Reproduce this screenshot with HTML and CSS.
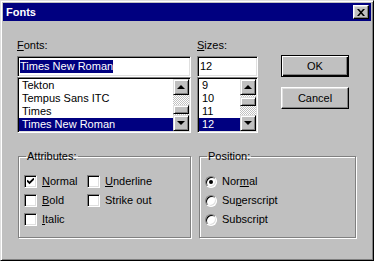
FILE: index.html
```html
<!DOCTYPE html>
<html lang="en">
<head>
  <meta charset="UTF-8" />
  <title>Fonts</title>
  <link rel="stylesheet" href="styles.css">
</head>
<body>
  <div class="window">
    <!-- Title bar -->
    <div class="titlebar">
      <span class="title">Fonts</span>
      <button class="close" aria-label="Close">
        <svg width="8" height="7" viewBox="0 0 8 7"><path d="M0 0h2l2 2.3L6 0h2L5 3.5 8 7H6L4 4.7 2 7H0l3-3.5z" fill="#000"/></svg>
      </button>
    </div>

    <div class="content">
      <!-- Font / size pickers and buttons -->
      <div class="top">
        <div class="field fonts">
          <label><u>F</u>onts:</label>
          <div class="textbox"><span class="sel">Times New Roman</span></div>
          <div class="listbox">
            <ul class="items">
              <li>Tekton</li>
              <li>Tempus Sans ITC</li>
              <li>Times</li>
              <li class="selected">Times New Roman</li>
            </ul>
            <div class="scrollbar">
              <div class="sb-btn"><span class="arrow up"></span></div>
              <div class="track" style="flex: 10"></div>
              <div class="thumb"></div>
              <div class="track" style="flex: 1"></div>
              <div class="sb-btn"><span class="arrow down"></span></div>
            </div>
          </div>
        </div>

        <div class="field sizes">
          <label><u>S</u>izes:</label>
          <div class="textbox"><span>12</span></div>
          <div class="listbox">
            <ul class="items">
              <li>9</li>
              <li>10</li>
              <li>11</li>
              <li class="selected">12</li>
            </ul>
            <div class="scrollbar">
              <div class="sb-btn"><span class="arrow up"></span></div>
              <div class="track" style="flex: 2"></div>
              <div class="thumb"></div>
              <div class="track" style="flex: 9"></div>
              <div class="sb-btn"><span class="arrow down"></span></div>
            </div>
          </div>
        </div>

        <div class="buttons">
          <button class="btn default">OK</button>
          <button class="btn">Cancel</button>
        </div>
      </div>

      <!-- Group boxes -->
      <div class="bottom">
        <fieldset class="group attributes">
          <legend>Attributes:</legend>
          <div class="checks">
            <div class="option"><span class="checkbox checked"><svg width="7" height="7" viewBox="0 0 7 7"><path d="M0 2.5l2.5 2.5L7 0.5" fill="none" stroke="#000" stroke-width="1.8"/></svg></span><span><u>N</u>ormal</span></div>
            <div class="option"><span class="checkbox"></span><span><u>U</u>nderline</span></div>
            <div class="option"><span class="checkbox"></span><span><u>B</u>old</span></div>
            <div class="option"><span class="checkbox"></span><span>Strike out</span></div>
            <div class="option"><span class="checkbox"></span><span><u>I</u>talic</span></div>
          </div>
        </fieldset>

        <fieldset class="group position">
          <legend>Position:</legend>
          <div class="radios">
            <div class="option"><span class="radio on"></span><span>Nor<u>m</u>al</span></div>
            <div class="option"><span class="radio"></span><span>Su<u>p</u>erscript</span></div>
            <div class="option"><span class="radio"></span><span>Subscript</span></div>
          </div>
        </fieldset>
      </div>
    </div>
  </div>
</body>
</html>
```

FILE: styles.css
```css
/* Basic Reset */
* {
  margin: 0;
  padding: 0;
  box-sizing: border-box;
}

body {
  background-color: #c0c0c0;
  font-family: "Liberation Sans", Arial, sans-serif;
  font-size: 11px;
  line-height: 13px;
  color: #000;
}

u {
  text-decoration: underline;
  text-underline-offset: 1px;
}

/* WINDOW FRAME */
.window {
  width: 374px;
  height: 261px;
  background-color: #c0c0c0;
  border: 1px solid;
  border-color: #dfdfdf #000 #000 #dfdfdf;
  box-shadow: inset 1px 1px #fff, inset -1px -1px #808080;
  padding: 2px;
}

/* TITLE BAR */
.titlebar {
  height: 18px;
  background-color: #000080;
  display: flex;
  align-items: center;
  justify-content: space-between;
  padding: 0 2px 0 3px;
}
.title {
  color: #fff;
  font-weight: bold;
}
.close {
  width: 16px;
  height: 14px;
  display: flex;
  align-items: center;
  justify-content: center;
  background-color: #c0c0c0;
  border: 1px solid;
  border-color: #fff #000 #000 #fff;
  box-shadow: inset -1px -1px #808080, inset 1px 1px #dfdfdf;
}

/* DIALOG CONTENT */
.content {
  padding: 18px 0 0 14px;
}

.top {
  display: flex;
}

.field label {
  display: block;
  height: 13px;
  margin-bottom: 4px;
}
.fonts { width: 174px; margin-right: 6px; }
.sizes { width: 61px; }

/* sunken 3D edge */
.textbox,
.listbox,
.checkbox {
  background-color: #fff;
  border: 1px solid;
  border-color: #808080 #fff #fff #808080;
  box-shadow: inset 1px 1px #000, inset -1px -1px #dfdfdf;
}

.textbox {
  height: 21px;
  padding: 3px 2px;
}
.textbox .sel {
  background-color: #000080;
  color: #fff;
  display: inline-block;
}

.listbox {
  height: 56px;
  padding: 1px;
  display: flex;
}
.items {
  list-style: none;
  flex: 1;
}
.items li {
  height: 13px;
  padding-left: 3px;
  white-space: nowrap;
}
.items li.selected {
  background-color: #000080;
  color: #fff;
}

/* SCROLLBAR */
.scrollbar {
  width: 16px;
  display: flex;
  flex-direction: column;
}
.sb-btn,
.thumb {
  background-color: #c0c0c0;
  border: 1px solid;
  border-color: #dfdfdf #000 #000 #dfdfdf;
  box-shadow: inset 1px 1px #fff, inset -1px -1px #808080;
}
.sb-btn {
  height: 16px;
  display: flex;
  align-items: center;
  justify-content: center;
}
.thumb { height: 9px; }
.track {
  background: repeating-conic-gradient(#fff 0 25%, #c0c0c0 0 50%) 0 0 / 2px 2px;
}
.arrow {
  width: 0;
  height: 0;
  border-left: 4px solid transparent;
  border-right: 4px solid transparent;
}
.arrow.up { border-bottom: 4px solid #000; }
.arrow.down { border-top: 4px solid #000; }

/* BUTTONS */
.buttons {
  margin-left: 23px;
  width: 68px;
  padding-top: 16px;
  display: flex;
  flex-direction: column;
  gap: 10px;
}
.btn {
  height: 22px;
  font: inherit;
  background-color: #c0c0c0;
  border: 1px solid;
  border-color: #fff #000 #000 #fff;
  box-shadow: inset -1px -1px #808080, inset 1px 1px #dfdfdf;
}
.btn.default {
  border: 1px solid #000;
  box-shadow: inset 1px 1px #fff, inset -1px -1px #000, inset -2px -2px #808080;
}

/* GROUP BOXES */
.bottom {
  display: flex;
  margin-top: 17px;
  margin-left: 1px;
  gap: 8px;
}
.group {
  height: 88px;
  border: 1px solid #808080;
  box-shadow: 1px 1px #fff, inset 1px 1px #fff;
  padding: 12px 5px 0 5px;
  min-width: 0;
}
.group legend {
  padding: 0 1px;
  margin-left: 2px;
  line-height: 13px;
}
.attributes { width: 173px; }
.position { width: 157px; }

.checks {
  display: grid;
  grid-template-columns: 63px auto;
  row-gap: 6px;
}
.radios {
  display: flex;
  flex-direction: column;
  gap: 6px;
}
.option {
  display: flex;
  align-items: center;
  gap: 5px;
  height: 13px;
  white-space: nowrap;
}

.checkbox {
  width: 13px;
  height: 13px;
  display: flex;
  align-items: center;
  justify-content: center;
}

.radio {
  width: 12px;
  height: 12px;
  border-radius: 50%;
  background: #fff;
  border: 1px solid;
  border-color: #808080 #fff #fff #808080;
  box-shadow: inset 1px 1px #000, inset -1px -1px #dfdfdf;
  position: relative;
}
.radio.on::after {
  content: "";
  position: absolute;
  left: 3px;
  top: 3px;
  width: 4px;
  height: 4px;
  border-radius: 50%;
  background: #000;
}
```
